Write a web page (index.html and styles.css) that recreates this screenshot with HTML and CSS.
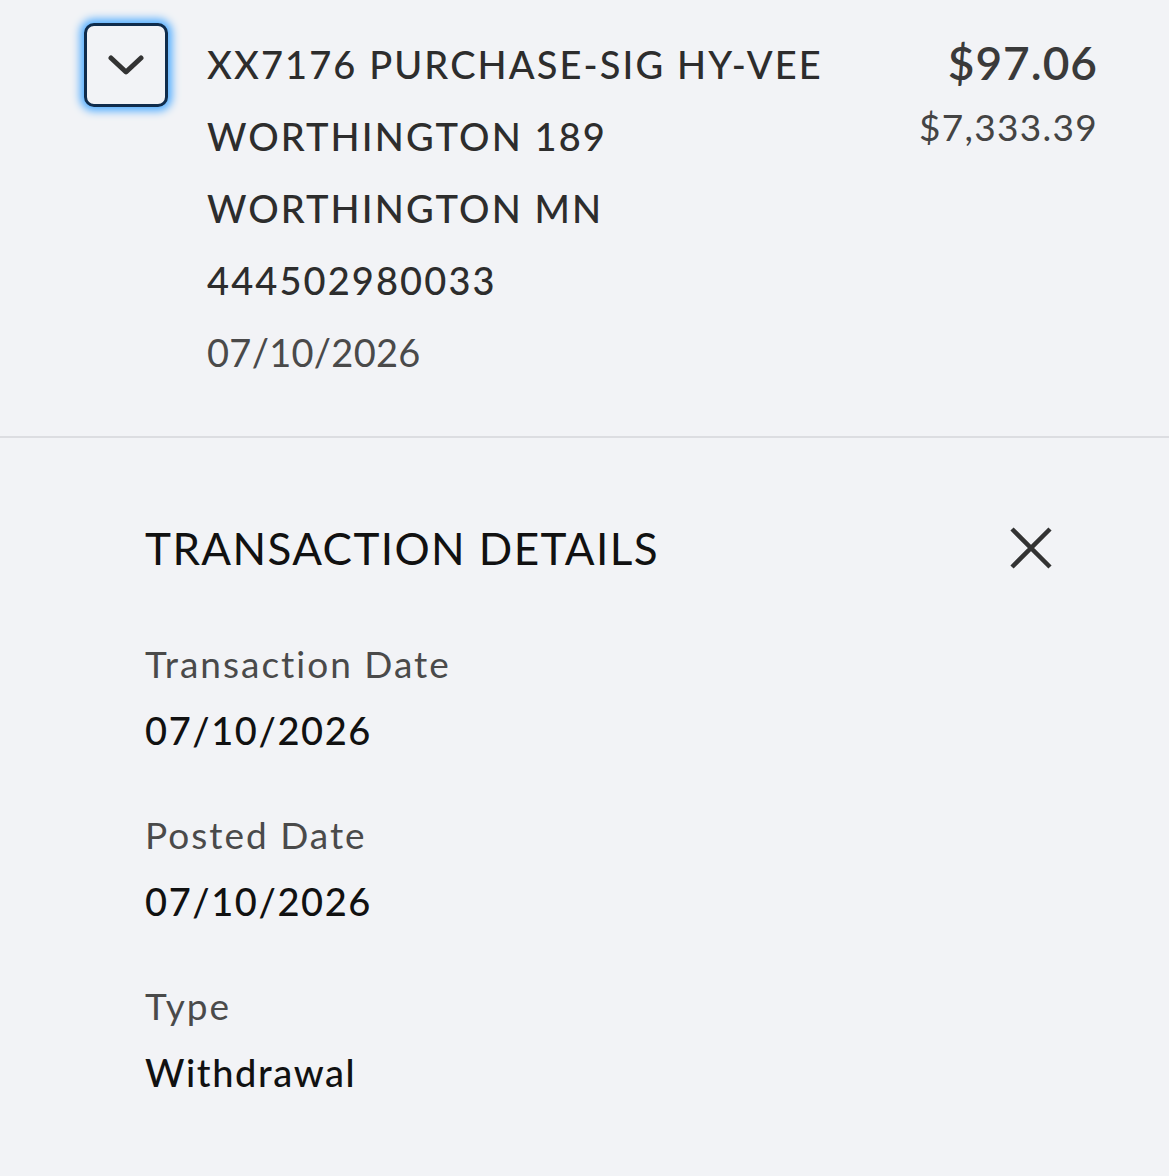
FILE: index.html
```html
<!DOCTYPE html>
<html lang="en">
<head>
    <meta charset="UTF-8">
    <meta name="viewport" content="width=device-width, initial-scale=1.0">
    <title>Transaction</title>
    <link rel="stylesheet" href="styles.css">
</head>
<body>
    <!-- Transaction row -->
    <div class="txn-row">
        <button class="toggle-button" aria-label="Collapse">
            <svg width="36" height="20" viewBox="0 0 36 20">
                <polyline points="3,3 18,17 33,3" fill="none" stroke="#333" stroke-width="5" stroke-linecap="round" stroke-linejoin="round"/>
            </svg>
        </button>
        <div class="txn-description">
            <div class="txn-line">XX7176 PURCHASE-SIG HY-VEE</div>
            <div class="txn-line">WORTHINGTON 189</div>
            <div class="txn-line">WORTHINGTON MN</div>
            <div class="txn-line">444502980033</div>
            <div class="txn-line txn-date">07/10/2026</div>
        </div>
        <div class="txn-amounts">
            <div class="txn-amount">$97.06</div>
            <div class="txn-balance">$7,333.39</div>
        </div>
    </div>

    <!-- Expanded details -->
    <div class="details">
        <div class="details-header">
            <div class="details-title">TRANSACTION DETAILS</div>
            <button class="close-button" aria-label="Close">
                <svg width="46" height="46" viewBox="0 0 46 46">
                    <path d="M4 4 L42 42 M42 4 L4 42" stroke="#333" stroke-width="4.5" fill="none"/>
                </svg>
            </button>
        </div>

        <div class="detail-item">
            <div class="detail-label">Transaction Date</div>
            <div class="detail-value">07/10/2026</div>
        </div>
        <div class="detail-item">
            <div class="detail-label">Posted Date</div>
            <div class="detail-value">07/10/2026</div>
        </div>
        <div class="detail-item">
            <div class="detail-label">Type</div>
            <div class="detail-value">Withdrawal</div>
        </div>
    </div>
</body>
</html>
```

FILE: styles.css
```css
/* Page base */
body {
    margin: 0;
    background-color: #f2f3f6;
    font-family: Lato, "Open Sans", sans-serif;
    color: #2d2d2d;
}

/* Transaction row */
.txn-row {
    display: flex;
    align-items: flex-start;
    padding: 23px 72px 0 84px;
    height: 413px;
    border-bottom: 2px solid #dcdde1;
}

.toggle-button {
    width: 84px;
    height: 84px;
    flex-shrink: 0;
    display: flex;
    justify-content: center;
    align-items: center;
    background-color: #f2f3f6;
    border: 3px solid #0f2c4c;
    border-radius: 10px;
    box-shadow: 0 0 8px 4px #52adff;
    padding: 0;
    margin-right: 39px;
}

.txn-description {
    flex: 1;
    margin-top: 5px;
}

.txn-line {
    font-size: 38px;
    font-weight: 500;
    line-height: 72px;
    letter-spacing: 2.1px;
    color: #2d2d2d;
}

.txn-date {
    font-weight: 400;
    letter-spacing: 0.3px;
    color: #4a4a4a;
}

.txn-amounts {
    text-align: right;
    margin-top: 8px;
    margin-right: -1px;
}

.txn-amount {
    font-size: 46px;
    font-weight: 600;
    line-height: 64px;
    letter-spacing: 1px;
    color: #3a3a3a;
}

.txn-balance {
    font-size: 37px;
    font-weight: 400;
    line-height: 64px;
    letter-spacing: 1.3px;
    color: #444;
}

/* Details panel */
.details {
    padding: 82px 115px 0 145px;
}

.details-header {
    display: flex;
    justify-content: space-between;
    align-items: center;
    height: 56px;
    margin-bottom: 55px;
}

.details-title {
    font-size: 44px;
    font-weight: 400;
    letter-spacing: 1.4px;
    color: #111;
}

.close-button {
    background: none;
    border: none;
    padding: 0;
    display: flex;
}

.detail-item {
    margin-bottom: 39px;
}

.detail-label {
    font-size: 37px;
    line-height: 66px;
    letter-spacing: 2px;
    color: #4a4a4a;
}

.detail-value {
    font-size: 38px;
    font-weight: 500;
    line-height: 66px;
    letter-spacing: 1.6px;
    color: #111;
}
```
